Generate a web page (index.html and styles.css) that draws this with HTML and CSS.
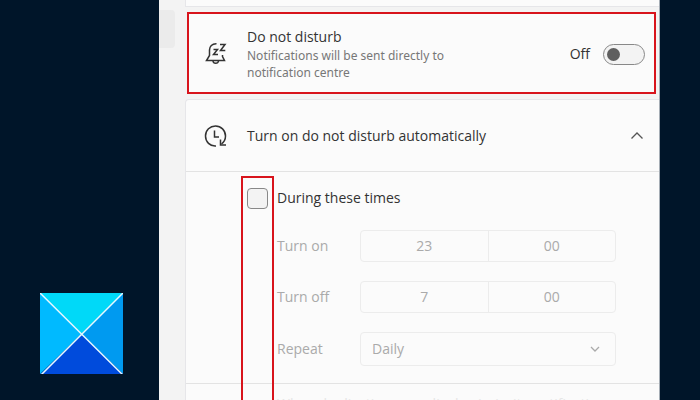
FILE: index.html
```
<!DOCTYPE html>
<html lang="en">

<head>
 <meta charset="UTF-8">
 <meta name="viewport" content="width=device-width, initial-scale=1.0">
 <title>Do not disturb settings</title>
 <link rel="stylesheet" href="styles.css">
</head>

<body>
 <aside class="brand">
  <svg class="logo" viewBox="0 0 83 81" role="img" aria-label="Logo">
   <path fill="#00d9f8" d="M0 0h83L41.500 41z" />
   <path fill="#009af0" d="M83 0v81L41.500 41z" />
   <path fill="#004bdc" d="M0 81h83L41.500 41z" />
   <path fill="#00baff" d="M0 0v81L41.500 41z" />
   <path stroke="#e6f8ff" stroke-width="1.500" d="M0 0l83 82M83 0L1 82" />
  </svg>
 </aside>

 <div class="window">
  <nav class="rail"><span class="rail-item"></span></nav>

  <main class="settings">
   <section class="card card-previous"></section>

   <section class="card card-dnd marked">
    <svg class="icon" viewBox="0 0 24 24">
     <path d="M12.500 1.700C8 1.500 5.500 4.500 5.500 8v5.500L2.500 18.500h18l-2-4V13" />
     <path d="M9 19c.3 3 5 3 5.500 0" />
     <path d="M9.500 7.500h4l-4 5h4.500M16 2.500h5L16.500 8.500h4.800" />
    </svg>
    <div class="card-text">
     <label class="title" for="dnd">Do not disturb</label>
     <p class="note">Notifications will be sent directly to notification centre</p>
    </div>
    <span class="state">Off</span>
    <input class="toggle" type="checkbox" role="switch" id="dnd">
   </section>

   <section class="card card-auto">
    <button class="expander" type="button" aria-expanded="true">
     <svg class="icon" viewBox="0 0 24 24">
      <path d="M13 22C7 22.500 2.500 17.800 2.500 12S7 2 12.500 2s10 4.300 10 10c0 3.200-1.400 6-4 8" />
      <path d="M11.500 6.500V13H16" />
      <path d="M17.500 15.500V21H23" />
     </svg>
     <span class="title expander-title">Turn on do not disturb automatically</span>
     <svg class="chevron" viewBox="0 0 14 14">
      <path d="M1.500 9.500L7 4l5.500 5.500" />
     </svg>
    </button>

    <div class="schedule">
     <label class="check-row">
      <input class="check" type="checkbox">
      <span>During these times</span>
     </label>

     <fieldset class="times" disabled>
      <div class="field">
       <label for="on-hour">Turn on</label>
       <div class="time">
        <input type="text" id="on-hour" value="23">
        <input type="text" aria-label="Turn on minutes" value="00">
       </div>
      </div>
      <div class="field">
       <label for="off-hour">Turn off</label>
       <div class="time">
        <input type="text" id="off-hour" value="7">
        <input type="text" aria-label="Turn off minutes" value="00">
       </div>
      </div>
      <div class="field">
       <label for="repeat">Repeat</label>
       <div class="select">
        <select id="repeat">
         <option>Daily</option>
        </select>
        <svg class="select-arrow" viewBox="0 0 14 14">
         <path d="M3 5l4 4 4-4" />
        </svg>
       </div>
      </div>
     </fieldset>

     <div class="next-row">When duplicating your display (priority notification</div>
     <div class="column-mark"></div>
    </div>
   </section>
  </main>
 </div>
</body>

</html>
```
FILE: styles.css
```
* {
 box-sizing: border-box;
}

body {
 margin: 0;
 height: 100vh;
 overflow: hidden;
 display: flex;
 background-color: #001529;
 color: #333;
 font: 14px/20px "Open Sans", "Noto Sans", sans-serif;
}

.brand {
 flex: 0 0 159px;
 display: flex;
 align-items: flex-end;
 padding: 0 36px 26px 40px;
}

.logo {
 width: 100%;
}

.window {
 flex: 1;
 min-width: 0;
 display: flex;
 margin-right: 40px;
 background-color: #f3f3f3;
 border-right: 1px solid #a5adb5;
}

.rail {
 flex: 0 0 26px;
 padding-top: 10px;
}

.rail-item {
 display: block;
 width: 16px;
 height: 38px;
 border-radius: 0 4px 4px 0;
 background-color: #ebebeb;
}

.settings {
 flex: 1;
 min-width: 0;
 display: flex;
 flex-direction: column;
 gap: 5px;
}

.card {
 background-color: #fbfbfb;
 border: 1px solid #e6e6e9;
 border-right: 0;
}

.card-previous {
 height: 7px;
 border-top: 0;
}

.card-dnd {
 display: flex;
 align-items: center;
 margin: 0 3px 0 2px;
 padding: 13px 9px 11px 15px;
}

.card.marked {
 border: 2px solid #d8141c;
}

.icon {
 flex: 0 0 24px;
 height: 24px;
 fill: none;
 stroke: #333;
 stroke-width: 1.500;
}

.card-text {
 flex: 1;
 margin-left: 19px;
}

.title {
 display: block;
}

.note {
 max-width: 220px;
 margin: 0;
 color: #777;
 font-family: "Noto Sans", sans-serif;
 font-size: 12px;
 line-height: 17px;
}

.state {
 margin-right: 13px;
}

.toggle {
 appearance: none;
 width: 42px;
 height: 21px;
 margin: 0;
 padding: 3px;
 border: 1px solid #888;
 border-radius: 11px;
 background-color: #f3f3f3;
}

.toggle::before {
 content: "";
 display: block;
 width: 13px;
 height: 13px;
 border-radius: 50%;
 background-color: #5f5f5f;
}

.toggle:checked::before {
 margin-left: auto;
}

.card-auto {
 flex: 1;
 min-height: 0;
 display: flex;
 flex-direction: column;
 border-bottom: 0;
 border-radius: 4px 0 0 0;
}

.expander {
 flex: none;
 display: flex;
 align-items: center;
 width: 100%;
 height: 72px;
 padding: 1px 15px 0 17px;
 border: 0;
 border-bottom: 1px solid #e3e3e3;
 background: none;
 color: inherit;
 font: inherit;
 text-align: left;
}

.expander-title {
 flex: 1;
 margin-left: 20px;
}

.chevron,
.select-arrow {
 width: 14px;
 height: 14px;
 fill: none;
 stroke: #555;
 stroke-width: 1.300;
}

.schedule {
 position: relative;
 flex: 1;
 min-height: 0;
 display: flex;
 flex-direction: column;
 padding-top: 16px;
}

.check-row {
 display: flex;
 align-items: center;
 gap: 9px;
 height: 20px;
 padding-left: 61px;
}

.check {
 appearance: none;
 width: 21px;
 height: 21px;
 margin: 0;
 border: 1px solid #888;
 border-radius: 4px;
 background-color: #f3f3f3;
}

.check:checked {
 background-color: #5f5f5f;
}

.times {
 display: grid;
 grid-template-columns: minmax(0, 1fr);
 gap: 19px;
 min-width: 0;
 margin: 0;
 padding: 22px 43px 17px 91px;
 border: 0;
 border-bottom: 1px solid #e3e3e3;
 color: #aaa;
}

.field {
 display: grid;
 grid-template-columns: 83px minmax(0, 1fr);
 align-items: center;
}

.time {
 display: flex;
 border: 1px solid #ececec;
 border-radius: 4px;
}

.time input {
 flex: 1;
 min-width: 0;
 height: 30px;
 padding: 0 0 2px;
 border: 0;
 background: none;
 color: #aaa;
 font: inherit;
 text-align: center;
}

.time input + input {
 border-left: 1px solid #ececec;
}

.select {
 position: relative;
}

.select select {
 appearance: none;
 display: block;
 width: 100%;
 height: 34px;
 padding: 0 11px;
 border: 1px solid #ececec;
 border-radius: 4px;
 background: none;
 color: #aaa;
 font: inherit;
 opacity: 1;
}

.select-arrow {
 position: absolute;
 right: 14px;
 top: 10px;
 stroke: #aaa;
}

.next-row {
 flex: 1 1 0;
 min-height: 0;
 overflow: hidden;
 padding: 10px 43px 0 91px;
 color: #e6e6e6;
 white-space: nowrap;
}

/* frame round the column of tick boxes, open at the bottom */
.column-mark {
 position: absolute;
 left: 55px;
 top: 4px;
 bottom: 0;
 width: 33px;
 border: 2px solid #d8141c;
 border-bottom: 0;
 pointer-events: none;
}
```
